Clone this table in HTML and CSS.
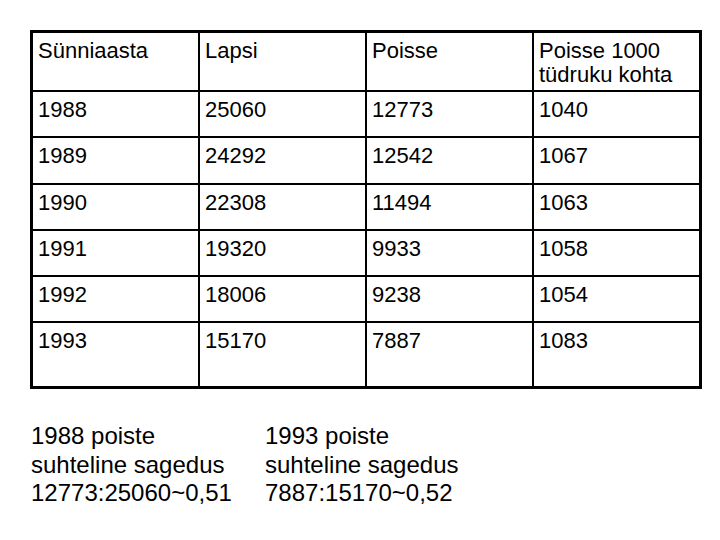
FILE: index.html
```html
<!DOCTYPE html>
<html lang="et">
<head>
<meta charset="utf-8">
<title>Sünniaasta</title>
<link rel="stylesheet" href="styles.css">
</head>
<body>
<div class="table" role="table">
  <div class="cell">Sünniaasta</div>
  <div class="cell">Lapsi</div>
  <div class="cell">Poisse</div>
  <div class="cell">Poisse 1000<br>tüdruku kohta</div>

  <div class="cell">1988</div>
  <div class="cell">25060</div>
  <div class="cell">12773</div>
  <div class="cell">1040</div>

  <div class="cell">1989</div>
  <div class="cell">24292</div>
  <div class="cell">12542</div>
  <div class="cell">1067</div>

  <div class="cell">1990</div>
  <div class="cell">22308</div>
  <div class="cell">11494</div>
  <div class="cell">1063</div>

  <div class="cell">1991</div>
  <div class="cell">19320</div>
  <div class="cell">9933</div>
  <div class="cell">1058</div>

  <div class="cell">1992</div>
  <div class="cell">18006</div>
  <div class="cell">9238</div>
  <div class="cell">1054</div>

  <div class="cell">1993</div>
  <div class="cell">15170</div>
  <div class="cell">7887</div>
  <div class="cell">1083</div>
</div>
<div class="notes">
  <p class="note note-first">1988 poiste<br>suhteline sagedus<br>12773:25060~0,51</p>
  <p class="note">1993 poiste<br>suhteline sagedus<br>7887:15170~0,52</p>
</div>
</body>
</html>
```

FILE: styles.css
```css
html, body {
  margin: 0;
  padding: 0;
  background: #fff;
}
body {
  font-family: "Liberation Sans", Arial, sans-serif;
  color: #000;
  width: 720px;
  height: 540px;
  overflow: hidden;
}
.table {
  display: grid;
  grid-template-columns: repeat(4, 165px);
  grid-template-rows: 57px 44px 45px 44px 44px 44px 63px;
  gap: 2px;
  background: #000;
  border: 3px solid #000;
  width: max-content;
  margin: 30px 0 0 30px;
}
.cell {
  background: #fff;
  padding: 6px 0 0 5px;
  font-size: 22px;
  line-height: 24px;
}
.notes {
  display: flex;
  margin: 33px 0 0 31px;
}
.note {
  margin: 0;
  font-size: 24px;
  line-height: 28.5px;
}
.note-first {
  width: 234px;
}
```
